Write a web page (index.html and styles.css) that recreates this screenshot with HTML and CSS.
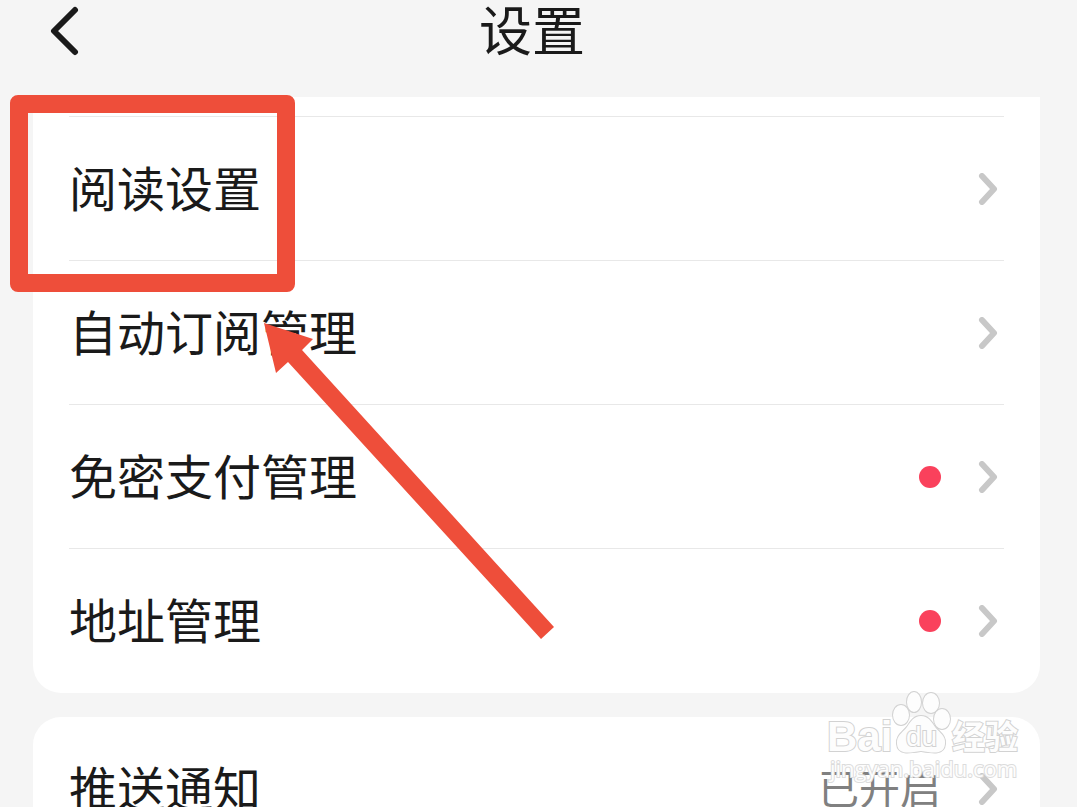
FILE: index.html
```html
<!DOCTYPE html>
<html lang="zh-CN">
<head>
    <meta charset="UTF-8">
    <meta name="viewport" content="width=device-width, initial-scale=1.0">
    <title>设置</title>
    <link rel="stylesheet" href="styles.css">
</head>
<body>
    <div class="screen">
        <header class="header">
            <button class="back" type="button" aria-label="返回">
                <svg width="30" height="50" viewBox="0 0 30 50"><path d="M26 4 L5 25 L26 46"/></svg>
            </button>
            <h1>设置</h1>
        </header>

        <main>
            <!-- Account settings -->
            <nav class="card card-first">
                <a class="row" href="#read">
                    <span class="label">阅读设置</span>
                    <svg class="chevron" width="20" height="32" viewBox="0 0 20 32"><path d="M4 3 L16 16 L4 29"/></svg>
                </a>
                <a class="row" href="#subscribe">
                    <span class="label">自动订阅管理</span>
                    <svg class="chevron" width="20" height="32" viewBox="0 0 20 32"><path d="M4 3 L16 16 L4 29"/></svg>
                </a>
                <a class="row" href="#pay">
                    <span class="label">免密支付管理</span>
                    <span class="dot"></span>
                    <svg class="chevron" width="20" height="32" viewBox="0 0 20 32"><path d="M4 3 L16 16 L4 29"/></svg>
                </a>
                <a class="row" href="#address">
                    <span class="label">地址管理</span>
                    <span class="dot"></span>
                    <svg class="chevron" width="20" height="32" viewBox="0 0 20 32"><path d="M4 3 L16 16 L4 29"/></svg>
                </a>
            </nav>

            <!-- Notifications -->
            <nav class="card">
                <a class="row" href="#push">
                    <span class="label">推送通知</span>
                    <span class="value">已开启</span>
                    <svg class="chevron" width="20" height="32" viewBox="0 0 20 32"><path d="M4 3 L16 16 L4 29"/></svg>
                </a>
            </nav>
        </main>

        <!-- Marks drawn over the list -->
        <div class="highlight"></div>
        <svg class="arrow" width="290" height="318" viewBox="0 0 290 318">
            <path d="M0 0 L49 16 L38 27 L290 304 L277 316 L24 39 L12 50 Z"/>
        </svg>

        <svg class="watermark" width="200" height="96" viewBox="0 0 200 96">
            <g class="wm-shape">
                <ellipse cx="78" cy="25" rx="8" ry="10"/>
                <ellipse cx="91" cy="12" rx="7" ry="10"/>
                <ellipse cx="108" cy="13" rx="8" ry="10"/>
                <ellipse cx="119" cy="29" rx="8" ry="10"/>
                <path d="M98 26 C91 26 88 31 84 37 C79 43 73 46 74 54 C75 65 86 63 98 61 C110 63 121 65 122 54 C123 46 117 43 112 37 C108 31 105 26 98 26 Z"/>
            </g>
            <text class="wm-logo" x="4" y="61">Bai</text>
            <text class="wm-du" x="83" y="56">du</text>
            <text class="wm-cn" x="129" y="59">经验</text>
            <text class="wm-url" x="7" y="87">jingyan.baidu.com</text>
        </svg>
    </div>
</body>
</html>
```
FILE: styles.css
```css
* {
    box-sizing: border-box;
}
body {
    margin: 0;
    background-color: #f5f5f5;
    color: #1a1a1a;
    font-family: "Noto Sans CJK SC", sans-serif;
}
.screen {
    position: relative;
    height: 100vh;
    overflow: hidden;
}
.header {
    display: grid;
    grid-template-columns: 1fr auto 1fr;
    align-items: start;
    height: 97px;
    padding: 0 62px 0 49px;
}
.header h1 {
    margin: 0;
    font-size: 53px;
    font-weight: 400;
    line-height: 56px;
}
.back {
    justify-self: start;
    display: flex;
    align-items: center;
    height: 62px;
    padding: 0;
    border: none;
    background: none;
    cursor: pointer;
}
.back path {
    fill: none;
    stroke: #1a1a1a;
    stroke-width: 6;
    stroke-linecap: round;
    stroke-linejoin: round;
}
.card {
    margin: 0 37px 24px 33px;
    padding: 0 36px;
    background-color: #fff;
    border-radius: 28px;
}
.card-first {
    padding-top: 19px;
    padding-bottom: 1px;
    border-radius: 0 0 28px 28px;
}
.row {
    display: flex;
    align-items: center;
    height: 144px;
    color: #1a1a1a;
    text-decoration: none;
}
.card-first .row {
    border-top: 1px solid #e8e8e8;
}
.label,
.value {
    padding-bottom: 6px;
    line-height: 64px;
}
.label {
    flex: 1;
    font-size: 48px;
}
.value {
    color: #808080;
    font-size: 41px;
}
.dot {
    width: 22px;
    height: 22px;
    border-radius: 50%;
    background-color: #fa415c;
}
.chevron {
    margin: 0 6px 0 37px;
}
.chevron path {
    fill: none;
    stroke: #c8c8c8;
    stroke-width: 6;
    stroke-linecap: round;
    stroke-linejoin: round;
}
.highlight {
    position: absolute;
    top: 95px;
    left: 10px;
    width: 285px;
    height: 197px;
    border: 18px solid #ee4e3a;
    border-radius: 8px;
}
.arrow {
    position: absolute;
    top: 323px;
    left: 264px;
    fill: #ee4e3a;
}
.watermark {
    position: absolute;
    right: 54px;
    bottom: 21px;
    fill: #fdfdfd;
    stroke: #d2d2d2;
    stroke-width: 2;
    paint-order: stroke;
}
.wm-shape {
    stroke-width: 2;
}
.wm-logo {
    font-family: "Liberation Sans", sans-serif;
    font-size: 42px;
    font-weight: 700;
}
.wm-du {
    font-family: "Liberation Sans", sans-serif;
    font-size: 28px;
}
.wm-cn {
    font-size: 33px;
    font-weight: 700;
}
.wm-url {
    font-family: "Open Sans", sans-serif;
    font-size: 22px;
    stroke: #dcdcdc;
}
```
